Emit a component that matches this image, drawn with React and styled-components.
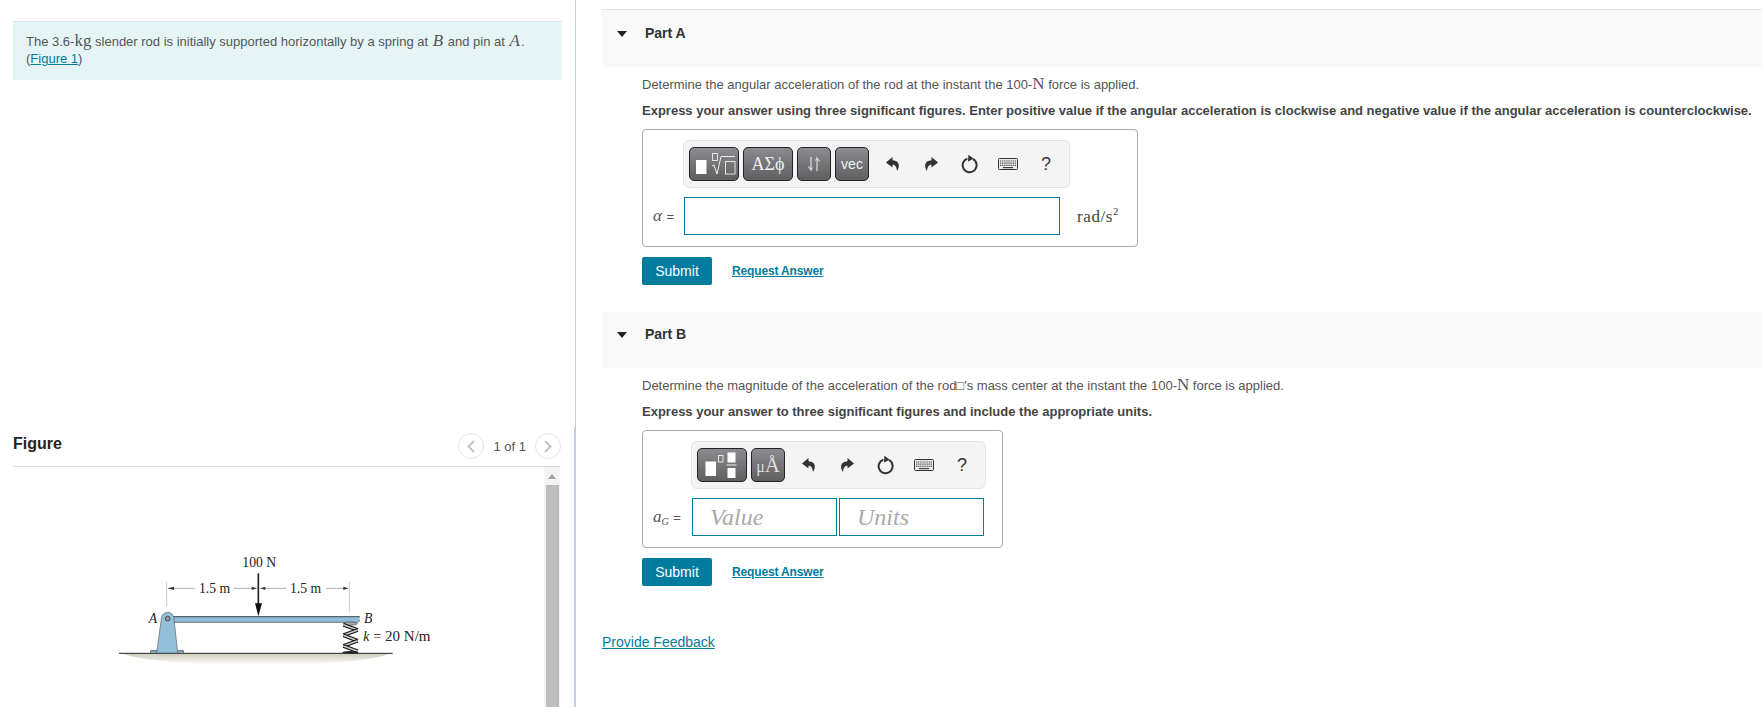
import React from 'react'
import styled, { createGlobalStyle } from 'styled-components'

const GlobalStyle = createGlobalStyle`
  html, body {
    margin: 0;
    padding: 0;
    background: #fff;
    overflow: hidden;
  }
  body {
    font-family: "Liberation Sans", Arial, sans-serif;
    font-size: 13px;
    color: #555;
  }
`

const UndoIcon = ({ flip }) => (
  <svg width="16" height="16" viewBox="0 0 16 16" style={flip ? { transform: 'scaleX(-1)' } : undefined}>
    <path d="M7.5 1 L1 6.6 L7.5 11.6 V8.8 C10 8.8 11.4 10.4 12 15 C14.8 10.8 15.2 4.6 7.5 4.2 Z" fill="#333" />
  </svg>
)

const ResetIcon = () => (
  <svg width="18" height="20" viewBox="0 0 18 20">
    <path d="M12.2 5.2 A7 7 0 1 1 6.4 4.6" fill="none" stroke="#333" strokeWidth="2" />
    <path d="M7.4 0.8 L12.8 4.8 L7 7.6 Z" fill="#333" />
  </svg>
)

const KeyboardIcon = () => (
  <svg width="20" height="12" viewBox="0 0 20 12">
    <rect x="0.5" y="0.5" width="19" height="11" rx="1" fill="#e8e8e8" stroke="#333" />
    <path d="M2 3 H18 M2 5.2 H18 M2 7.4 H18" stroke="#555" strokeWidth="1.2" strokeDasharray="1.3 .8" />
    <path d="M5 9.6 H15" stroke="#444" strokeWidth="1.2" />
  </svg>
)

const RootIcon = () => (
  <svg width="48" height="32" viewBox="0 0 48 32">
    <rect x="6" y="12" width="10.5" height="14" fill="#fff" />
    <rect x="22.5" y="5.5" width="5" height="7" fill="none" stroke="#eee" strokeWidth="0.9" />
    <path d="M22 18 L24 17 L27 26 L31 8.5 H45" fill="none" stroke="#eee" strokeWidth="1" />
    <rect x="35.5" y="13.5" width="9.5" height="12.5" fill="none" stroke="#eee" strokeWidth="0.9" />
  </svg>
)

const FractionIcon = () => (
  <svg width="48" height="32" viewBox="0 0 48 32">
    <rect x="7.5" y="12.5" width="10.5" height="14.5" fill="#fff" />
    <rect x="20.5" y="6.5" width="4.5" height="6.5" fill="none" stroke="#eee" strokeWidth="0.9" />
    <rect x="29.5" y="3.5" width="8" height="10" fill="#fff" />
    <rect x="28.5" y="15.5" width="10" height="1" fill="#eee" />
    <rect x="29.5" y="19" width="8" height="10" fill="#fff" />
  </svg>
)

const ArrowsIcon = () => (
  <svg width="14" height="16" viewBox="0 0 14 16">
    <path d="M4 1 V14 L1.5 10.5 M10 15 V2 L12.5 5.5" fill="none" stroke="#ddd" strokeWidth="1.2" />
    <path d="M4 14 L5.6 11.5 M10 2 L8.4 4.5" fill="none" stroke="#ddd" strokeWidth="1" />
  </svg>
)

const Chevron = ({ left }) => (
  <svg width="8" height="13" viewBox="0 0 8 13">
    <path d={left ? 'M7 1 L1.5 6.5 L7 12' : 'M1 1 L6.5 6.5 L1 12'} fill="none" stroke="#c4c4c4" strokeWidth="2" />
  </svg>
)

const Spring = () => {
  const ys = [254, 270, 286, 302, 318, 334]
  return (
    <g>
      <ellipse cx="751" cy="251" rx="21" ry="5" fill="#aaa" stroke="#333" strokeWidth="1.5" />
      {ys.slice(0, -1).map((y, i) => (
        <g key={y}>
          <path d={`M${i % 2 ? 773 : 730} ${y} L${i % 2 ? 730 : 773} ${ys[i + 1]}`} stroke="#111" strokeWidth="11" />
          <path d={`M${i % 2 ? 773 : 730} ${y} L${i % 2 ? 730 : 773} ${ys[i + 1]}`} stroke="#ccc" strokeWidth="5" />
        </g>
      ))}
      <ellipse cx="751" cy="337" rx="25" ry="4" fill="#222" />
    </g>
  )
}

const RodFigure = () => (
  <svg width="360" height="130" viewBox="0 0 1080 390">
    <defs>
      <linearGradient id="floor" x1="0" y1="0" x2="0" y2="1">
        <stop offset="0" stopColor="#cfccba" />
        <stop offset="1" stopColor="#fff" />
      </linearGradient>
    </defs>
    <path d="M70 341 H868 C780 385 170 385 70 341 Z" fill="url(#floor)" />
    <path d="M57 340 H878" stroke="#222" strokeWidth="3" />

    <path d="M200 125 V200 M748 125 V215" stroke="#aaa" strokeWidth="2" />
    <path d="M205 145 H285 M402 145 H470 M480 145 H558 M678 145 H745" stroke="#888" strokeWidth="2" />
    <path d="M203 145 L222 140 V150 Z M470 145 L455 140 V150 Z M481 145 L496 140 V150 Z M745 145 L730 140 V150 Z" fill="#333" />

    <rect x="205" y="229" width="574" height="18" fill="#8fbdd8" />
    <path d="M205 230 H779" stroke="#56656e" strokeWidth="4" />
    <path d="M205 247 H772 L779 240" fill="none" stroke="#56656e" strokeWidth="2.5" />
    <Spring />

    <rect x="152" y="332" width="24" height="8" fill="#7ba6b8" stroke="#444" strokeWidth="2" />
    <rect x="226" y="332" width="24" height="8" fill="#7ba6b8" stroke="#444" strokeWidth="2" />
    <path d="M170 339 L184 236 A19 19 0 0 1 222 236 L233 339 Z" fill="#93bfd9" stroke="#55646d" strokeWidth="2" />
    <circle cx="203" cy="236" r="7" fill="#999" stroke="#333" strokeWidth="2.5" />

    <path d="M475 100 V195" stroke="#222" strokeWidth="5" />
    <path d="M465 190 H486 L475 229 Z" fill="#111" />

    <FigureText x="427" y="82">100 N</FigureText>
    <FigureText x="297" y="158">1.5 m</FigureText>
    <FigureText x="570" y="158">1.5 m</FigureText>
    <FigureText x="146" y="250" $italic>A</FigureText>
    <FigureText x="792" y="250" $italic>B</FigureText>
    <FigureText x="790" y="302"><tspan fontStyle="italic">k</tspan><tspan dx="12">=</tspan><tspan dx="12" fontSize="45">20 N/m</tspan></FigureText>
  </svg>
)

const PartSection = ({ label, ruled, children }) => (
  <section>
    <PartHeader $ruled={ruled}>
      <Caret />
      <PartTitle>{label}</PartTitle>
    </PartHeader>
    <PartBody>{children}</PartBody>
  </section>
)

const ToolIcons = () => (
  <ToolGroup>
    <ToolIcon><UndoIcon /></ToolIcon>
    <ToolIcon><UndoIcon flip /></ToolIcon>
    <ToolIcon><ResetIcon /></ToolIcon>
    <ToolIcon><KeyboardIcon /></ToolIcon>
    <ToolIcon><HelpMark>?</HelpMark></ToolIcon>
  </ToolGroup>
)

const Actions = () => (
  <ActionRow>
    <SubmitButton>Submit</SubmitButton>
    <RequestLink href="#">Request Answer</RequestLink>
  </ActionRow>
)

const App = () => (
  <Page>
    <GlobalStyle />
    <LeftPane>
      <Intro>
        The 3.6-<MathUpright>kg</MathUpright> slender rod is initially supported horizontally by a spring at <MathItalic>B</MathItalic> and pin at <MathItalic>A</MathItalic>.
        <br />
        (<TealLink href="#">Figure 1</TealLink>)
      </Intro>
      <FigureHeader>
        <FigureTitle>Figure</FigureTitle>
        <Pager>
          <PagerButton><Chevron left /></PagerButton>
          <PagerLabel>1 of 1</PagerLabel>
          <PagerButton><Chevron /></PagerButton>
        </Pager>
      </FigureHeader>
      <FigureArea>
        <FigureCanvas><RodFigure /></FigureCanvas>
        <ScrollBar>
          <ScrollArrow />
          <ScrollThumb />
        </ScrollBar>
      </FigureArea>
    </LeftPane>
    <RightPane>
      <PartSection label="Part A" ruled>
        <Prompt>Determine the angular acceleration of the rod at the instant the 100-<MathUpright>N</MathUpright> force is applied.</Prompt>
        <Instruction>Express your answer using three significant figures. Enter positive value if the angular acceleration is clockwise and negative value if the angular acceleration is counterclockwise.</Instruction>
        <AnswerBox $width={496} $height={118}>
          <Toolbar $left={40} $width={387}>
            <MathButton $width={50}><RootIcon /></MathButton>
            <MathButton $width={50}><GreekText>ΑΣϕ</GreekText></MathButton>
            <MathButton $width={34}><ArrowsIcon /></MathButton>
            <MathButton $width={34}><VecText>vec</VecText></MathButton>
            <ToolIcons />
          </Toolbar>
          <InputRow>
            <VarLabel $width={41}><MathItalic>α</MathItalic> =</VarLabel>
            <AnswerInput $width={376} />
            <UnitLabel>rad/s<sup>2</sup></UnitLabel>
          </InputRow>
        </AnswerBox>
        <Actions />
      </PartSection>
      <PartSpacer />
      <PartSection label="Part B">
        <Prompt>Determine the magnitude of the acceleration of the rod□'s mass center at the instant the 100-<MathUpright>N</MathUpright> force is applied.</Prompt>
        <Instruction>Express your answer to three significant figures and include the appropriate units.</Instruction>
        <AnswerBox $width={361} $height={118}>
          <Toolbar $left={48} $width={295}>
            <MathButton $width={50}><FractionIcon /></MathButton>
            <MathButton $width={34}><UnitsText>μ<BigA>Å</BigA></UnitsText></MathButton>
            <ToolIcons />
          </Toolbar>
          <InputRow>
            <VarLabel $width={49}><MathItalic>a<SubG>G</SubG></MathItalic> =</VarLabel>
            <AnswerInput $width={145} placeholder="Value" />
            <AnswerInput $width={145} $gap={2} placeholder="Units" />
          </InputRow>
        </AnswerBox>
        <Actions />
      </PartSection>
      <FeedbackLink href="#">Provide Feedback</FeedbackLink>
    </RightPane>
  </Page>
)

export default App

const Page = styled.div`
  display: flex;
  width: 1762px;
  height: 707px;
  overflow: hidden;
`

const LeftPane = styled.div`
  position: relative;
  display: flex;
  flex-direction: column;
  flex: none;
  width: 549px;
  padding: 21px 13px 0 13px;
  border-right: 1px solid #bdd0e4;
  &::after {
    content: "";
    position: absolute;
    top: 427px;
    right: 0;
    bottom: 0;
    width: 1px;
    background: #bdd0e4;
  }
`

const Intro = styled.div`
  height: 59px;
  box-sizing: border-box;
  padding: 11px 13px 0 13px;
  background: #e5f5f6;
  border-top: 1px solid #dde5ea;
  font-size: 13px;
  line-height: 17px;
  color: #555;
`

const MathUpright = styled.span`
  font-family: "Liberation Serif", serif;
  font-size: 17px;
  line-height: 0;
`

const MathItalic = styled.span`
  font-family: "Liberation Serif", serif;
  font-size: 17px;
  line-height: 0;
  font-style: italic;
  padding: 0 1px;
`

const SubG = styled.sub`
  font-size: 10px;
  vertical-align: -3px;
`

const TealLink = styled.a`
  color: #007c9e;
  text-decoration: underline;
`

const FigureHeader = styled.div`
  display: flex;
  align-items: flex-end;
  justify-content: space-between;
  height: 387px;
  box-sizing: border-box;
  margin-right: 2px;
  padding-bottom: 7px;
  border-bottom: 1px solid #dcdcdc;
`

const FigureTitle = styled.h2`
  margin: 0 0 6px;
  font-size: 16px;
  line-height: 18px;
  font-weight: bold;
  color: #222;
`

const Pager = styled.div`
  display: flex;
  align-items: center;
  gap: 9px;
  margin-right: -1px;
`

const PagerButton = styled.span`
  display: flex;
  align-items: center;
  justify-content: center;
  width: 26px;
  height: 26px;
  border: 1px solid #e4e4e4;
  border-radius: 50%;
  box-sizing: border-box;
`

const PagerLabel = styled.span`
  font-size: 13px;
  color: #555;
`

const FigureArea = styled.div`
  display: flex;
  flex: 1;
  min-height: 0;
  margin-right: 2px;
  justify-content: space-between;
`

const FigureCanvas = styled.div`
  padding: 73px 0 0 87px;
`

const FigureText = styled.text`
  font-family: "Liberation Serif", serif;
  font-size: 41px;
  font-style: ${({ $italic }) => ($italic ? 'italic' : 'normal')};
  fill: #222;
`

const ScrollBar = styled.div`
  display: flex;
  flex-direction: column;
  align-items: center;
  width: 16px;
  background: #f3f3f3;
`

const ScrollArrow = styled.span`
  flex: none;
  width: 0;
  height: 0;
  margin: 7px 0 6px;
  border-left: 4px solid transparent;
  border-right: 4px solid transparent;
  border-bottom: 5px solid #a3a3a3;
`

const ScrollThumb = styled.span`
  flex: 1;
  width: 13px;
  background: #bdbdbd;
`

const RightPane = styled.div`
  flex: 1;
  min-width: 0;
  padding: 9px 0 0 26px;
`

const PartHeader = styled.div`
  display: flex;
  align-items: flex-start;
  height: ${({ $ruled }) => ($ruled ? '58px' : '56px')};
  box-sizing: border-box;
  padding: ${({ $ruled }) => ($ruled ? '16px' : '15px')} 0 0 15px;
  background: #f9f9f9;
  border-top: ${({ $ruled }) => ($ruled ? '1px solid #e2e2e2' : 'none')};
`

const Caret = styled.span`
  width: 0;
  height: 0;
  margin: 5px 18px 0 0;
  border-left: 5px solid transparent;
  border-right: 5px solid transparent;
  border-top: 6px solid #222;
`

const PartTitle = styled.h3`
  margin: 0;
  font-size: 14px;
  line-height: 15px;
  font-weight: bold;
  color: #333;
`

const PartBody = styled.div`
  padding: 9px 0 0 40px;
`

const PartSpacer = styled.div`
  height: 27px;
`

const Prompt = styled.p`
  margin: 0;
  font-size: 13px;
  line-height: 17px;
  color: #555;
`

const Instruction = styled.p`
  margin: 9px 0 10px;
  font-size: 13px;
  line-height: 17px;
  font-weight: bold;
  color: #444;
  white-space: nowrap;
`

const AnswerBox = styled.div`
  width: ${({ $width }) => $width}px;
  height: ${({ $height }) => $height}px;
  box-sizing: border-box;
  border: 1px solid #aaa;
  border-radius: 4px;
  padding-top: 10px;
`

const Toolbar = styled.div`
  display: flex;
  align-items: center;
  gap: 4px;
  width: ${({ $width }) => $width}px;
  height: 48px;
  box-sizing: border-box;
  margin-left: ${({ $left }) => $left}px;
  padding-left: 5px;
  background: #f4f4f4;
  border: 1px solid #e3e3e3;
  border-radius: 6px;
`

const MathButton = styled.div`
  display: flex;
  align-items: center;
  justify-content: center;
  width: ${({ $width }) => $width}px;
  height: 34px;
  flex: none;
  box-sizing: border-box;
  background: linear-gradient(#8c8c90, #5f5f60);
  border: 1px solid #222;
  border-radius: 5px;
  color: #eee;
  overflow: hidden;
`

const GreekText = styled.span`
  font-family: "Liberation Serif", serif;
  font-size: 18px;
`

const VecText = styled.span`
  font-size: 14px;
`

const UnitsText = styled.span`
  font-family: "Liberation Serif", serif;
  font-size: 16px;
  color: #ddd;
`

const BigA = styled.span`
  font-size: 21px;
`

const ToolGroup = styled.div`
  display: flex;
  align-items: center;
  margin-left: 1px;
`

const ToolIcon = styled.span`
  display: flex;
  align-items: center;
  justify-content: center;
  width: 38.25px;
  height: 24px;
`

const HelpMark = styled.span`
  font-size: 18px;
  color: #333;
`

const InputRow = styled.div`
  display: flex;
  align-items: center;
  margin-top: 9px;
`

const VarLabel = styled.span`
  width: ${({ $width }) => $width}px;
  padding-left: 9px;
  box-sizing: border-box;
  flex: none;
  font-size: 13px;
  white-space: nowrap;
  color: #555;
`

const AnswerInput = styled.input`
  width: ${({ $width }) => $width}px;
  height: 38px;
  box-sizing: border-box;
  margin: 0 0 0 ${({ $gap }) => $gap || 0}px;
  padding: 0 0 0 17px;
  border: 1px solid #007c9e;
  outline: none;
  background: #fff;
  font-family: "Liberation Serif", serif;
  font-size: 24px;
  font-style: italic;
  &::placeholder {
    color: #aaa;
    opacity: 1;
  }
`

const UnitLabel = styled.span`
  margin: 2px 0 0 17px;
  font-family: "Liberation Serif", serif;
  font-size: 17px;
  letter-spacing: 0.6px;
  color: #444;
  white-space: nowrap;
  sup {
    font-size: 11px;
    line-height: 0;
  }
`

const ActionRow = styled.div`
  display: flex;
  align-items: center;
  gap: 20px;
  margin-top: 10px;
`

const SubmitButton = styled.button`
  width: 70px;
  height: 28px;
  padding: 0;
  border: none;
  border-radius: 2px;
  background: #007c9e;
  color: #fff;
  font-family: "Liberation Sans", Arial, sans-serif;
  font-size: 14px;
`

const RequestLink = styled.a`
  color: #007c9e;
  font-size: 12px;
  font-weight: bold;
  letter-spacing: -0.15px;
  text-decoration: underline;
`

const FeedbackLink = styled.a`
  display: block;
  margin-top: 48px;
  color: #007c9e;
  font-size: 14px;
  text-decoration: underline;
`
